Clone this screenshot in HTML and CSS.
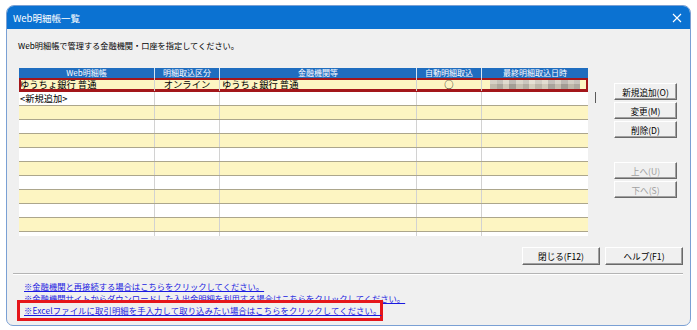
FILE: index.html
```html
<!DOCTYPE html>
<html>

<head>
    <meta charset="utf-8">
    <title>Web明細帳一覧</title>
    <link rel="stylesheet" href="styles.css">
</head>

<body>
    <div class="window">
        <div class="titlebar">
            <span class="title">Web明細帳一覧</span>
            <svg class="close" width="10" height="10" viewBox="0 0 10 10">
                <path d="M1 1 L9 9 M9 1 L1 9" stroke="#fff" stroke-width="1.1" fill="none" />
            </svg>
        </div>
        <div class="content">
            <p class="intro">Web明細帳で管理する金融機関・口座を指定してください。</p>
            <div class="main">
                <div class="grid">
                    <div class="row head">
                        <div class="c">Web明細帳</div>
                        <div class="c">明細取込区分</div>
                        <div class="c">金融機関等</div>
                        <div class="c">自動明細取込</div>
                        <div class="c">最終明細取込日時</div>
                    </div>
                    <div class="row sel">
                        <div class="c c1">ゆうちょ銀行 普通</div>
                        <div class="c c2">オンライン</div>
                        <div class="c c3">ゆうちょ銀行 普通</div>
                        <div class="c c4">○</div>
                        <div class="c c5"><span class="blur"></span></div>
                    </div>
                    <div class="row">
                        <div class="c c1">&lt;新規追加&gt;</div>
                        <div class="c"></div>
                        <div class="c"></div>
                        <div class="c"></div>
                        <div class="c"></div>
                    </div>
                    <div class="row"><div class="c"></div><div class="c"></div><div class="c"></div><div class="c"></div><div class="c"></div></div>
                    <div class="row"><div class="c"></div><div class="c"></div><div class="c"></div><div class="c"></div><div class="c"></div></div>
                    <div class="row"><div class="c"></div><div class="c"></div><div class="c"></div><div class="c"></div><div class="c"></div></div>
                    <div class="row"><div class="c"></div><div class="c"></div><div class="c"></div><div class="c"></div><div class="c"></div></div>
                    <div class="row"><div class="c"></div><div class="c"></div><div class="c"></div><div class="c"></div><div class="c"></div></div>
                    <div class="row"><div class="c"></div><div class="c"></div><div class="c"></div><div class="c"></div><div class="c"></div></div>
                    <div class="row"><div class="c"></div><div class="c"></div><div class="c"></div><div class="c"></div><div class="c"></div></div>
                    <div class="row"><div class="c"></div><div class="c"></div><div class="c"></div><div class="c"></div><div class="c"></div></div>
                    <div class="row"><div class="c"></div><div class="c"></div><div class="c"></div><div class="c"></div><div class="c"></div></div>
                    <div class="row"><div class="c"></div><div class="c"></div><div class="c"></div><div class="c"></div><div class="c"></div></div>
                </div>
                <div class="vbar"><span class="mark"></span></div>
                <div class="side">
                    <button class="btn">新規追加(O)</button>
                    <button class="btn">変更(M)</button>
                    <button class="btn">削除(D)</button>
                    <button class="btn off gap">上へ(U)</button>
                    <button class="btn off">下へ(S)</button>
                </div>
            </div>
            <div class="actions">
                <button class="btn wide">閉じる(F12)</button>
                <button class="btn wide">ヘルプ(F1)</button>
            </div>
            <div class="sep"></div>
            <div class="links">
                <a href="#">※金融機関と再接続する場合はこちらをクリックしてください。</a>
                <a href="#">※金融機関サイトからダウンロードした入出金明細を利用する場合はこちらをクリックしてください。</a>
                <div class="hl"><a href="#">※Excelファイルに取引明細を手入力して取り込みたい場合はこちらをクリックしてください。</a></div>
            </div>
        </div>
    </div>
</body>

</html>
```

FILE: styles.css
```css
body {
    margin: 0;
    background: #fff;
    font-family: "Noto Sans CJK JP", "Noto Sans", sans-serif;
    color: #000;
}

.window {
    margin: 5px 0 0 6px;
    width: 685px;
    height: 321px;
    box-sizing: border-box;
    border: 1px solid #7aa0d4;
    border-radius: 8px 8px 7px 7px;
    background: #f0f0f0;
    overflow: hidden;
    display: flex;
    flex-direction: column;
}

.titlebar {
    height: 23px;
    flex: none;
    background: #0b72d2;
    color: #fff;
    display: flex;
    align-items: center;
    justify-content: space-between;
    padding: 0 8px 0 6px;
    font-size: 9.5px;
}

.close {
    display: block;
}

.content {
    flex: 1;
    padding: 0 7px 0 6px;
}

.intro {
    margin: 10px 0 0 5px;
    font-size: 8.2px;
    line-height: 12px;
}

.main {
    display: flex;
    margin-top: 17px;
    padding-left: 6px;
}

/* list */
.grid {
    width: 569px;
    height: 168px;
    overflow: hidden;
    background: #fff;
    flex: none;
}

.row {
    display: grid;
    grid-template-columns: 136px 65px 197px 65px 106px;
    height: 14px;
    box-sizing: border-box;
    border-bottom: 1px solid #aca68c;
    font-size: 9.3px;
    line-height: 13px;
    white-space: nowrap;
}

.row:nth-child(even) {
    background: #fdf5c2;
}

.row .c {
    border-right: 1px solid #d2d2d2;
    overflow: hidden;
}

.row .c:last-child {
    border-right: 0;
}

.row.head {
    height: 10px;
    border-bottom: 0;
    background: #1f6dbf;
    color: #fff;
    font-size: 8px;
    line-height: 10px;
    text-align: center;
}

.row.head .c {
    border-right-color: #d8e6f4;
}

.row.sel {
    box-shadow: inset 0 0 0 2px #a3161a;
    border-bottom-color: #a3161a;
}

.c1 {
    padding-left: 1px;
}

.c2,
.c4 {
    text-align: center;
}

.c3 {
    padding-left: 2px;
}

.blur {
    display: block;
    margin: 2px 0 0 8px;
    width: 90px;
    height: 9px;
    background:
        linear-gradient(180deg, rgba(255, 255, 255, 0.25) 0 4px, rgba(0, 0, 0, 0.04) 4px 9px),
        linear-gradient(90deg, #c9c2b4 0 7px, #b3ada3 7px 13px, #d6cfbf 13px 19px, #a9a39b 19px 26px,
            #cfc8b9 26px 33px, #b9b3a8 33px 39px, #ddd6c5 39px 45px, #c3bcaf 45px 52px,
            #d9d2c2 52px 58px, #b0aaa1 58px 65px, #cdc6b7 65px 71px, #a8a29a 71px 78px,
            #c6bfb1 78px 84px, #b5afa5 84px 90px);
}

.vbar {
    width: 26px;
    flex: none;
}

.mark {
    display: block;
    margin: 24px 0 0 7px;
    width: 1px;
    height: 11px;
    background: #5a5a5a;
}

.side {
    display: flex;
    flex-direction: column;
    gap: 2px;
    padding-top: 15px;
}

/* buttons */
.btn {
    width: 63px;
    height: 17px;
    padding: 0;
    box-sizing: border-box;
    background: #f0f0f0;
    border: 1px solid;
    border-color: #fff #696969 #696969 #fff;
    box-shadow: inset -1px -1px 0 #a0a0a0;
    font-family: "Noto Sans CJK JP", "Noto Sans", sans-serif;
    font-size: 8.6px;
    line-height: 14px;
    color: #000;
}

.btn.off {
    color: #a0a0a0;
}

.btn.gap {
    margin-top: 22px;
}

.btn.wide {
    width: 78px;
    height: 18px;
}

.actions {
    display: flex;
    justify-content: flex-end;
    gap: 5px;
    margin-top: 11px;
}

.sep {
    margin-top: 8px;
    border-top: 1px solid #b4b4b4;
    border-bottom: 1px solid #fff;
}

/* links */
.links {
    margin-top: 5px;
    padding-left: 11px;
    font-size: 8.3px;
    line-height: 12px;
    white-space: nowrap;
}

.links a {
    display: block;
    color: #1a1ae0;
    text-decoration: underline;
}

.hl {
    position: relative;
    margin: -4px 0 0 -7px;
    width: 366px;
    height: 21px;
    box-sizing: border-box;
    border: 3px solid #e5161b;
    padding: 1px 2px 0 4px;
    background: #f0f0f0;
}

.hl a {
    letter-spacing: 0.15px;
}
```
